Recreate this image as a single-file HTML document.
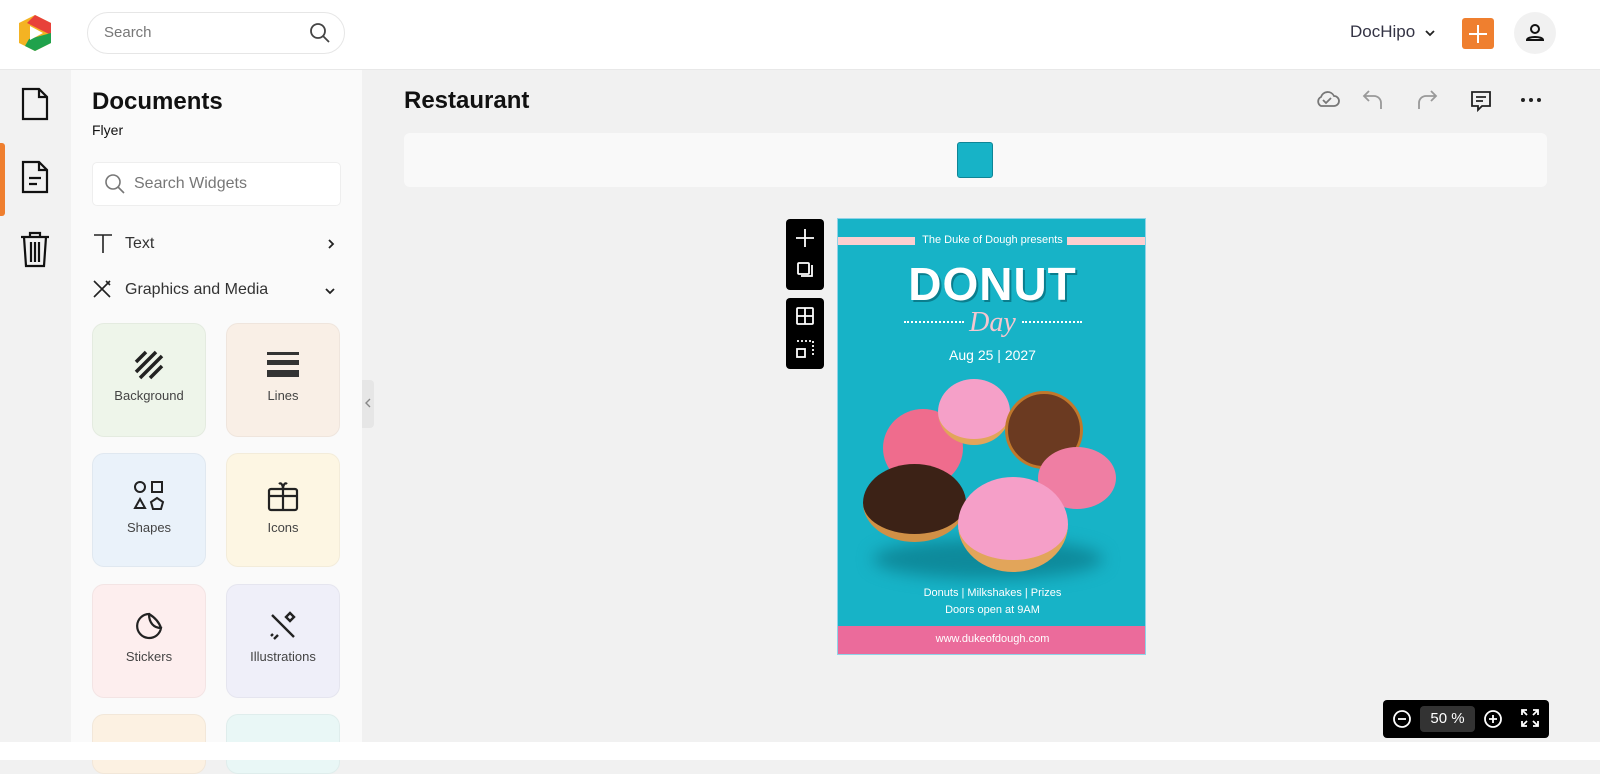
<!DOCTYPE html>
<html><head><meta charset="utf-8"><style>
*{box-sizing:border-box;margin:0;padding:0}
body{width:1600px;height:760px;overflow:hidden;font-family:"Liberation Sans",sans-serif;background:#f1f1f1;position:relative;color:#111}
.abs{position:absolute}
.hdr{left:0;top:0;width:1600px;height:70px;background:#fff;border-bottom:1px solid #e8e8e8}
.search{left:87px;top:12px;width:258px;height:42px;border:1px solid #e6e6e6;border-radius:21px;font-size:15px;color:#777;padding:11px 16px}
.rail{left:0;top:70px;width:71px;height:690px;background:#f2f2f2}
.panel{left:71px;top:70px;width:291px;height:690px;background:#fafafa}
.tile{width:114px;height:114px;border-radius:12px;border:1px solid rgba(0,0,0,.04);font-size:13px;color:#444;text-align:center}
.tile svg{display:block;margin:26px auto 8px}
</style></head><body>
<div class="abs hdr"></div>
<svg class="abs" style="left:15px;top:13px" width="40" height="40" viewBox="0 0 40 40"><path d="M20 2 L36 10 L36 30 L20 38 L4 30 L4 10Z" fill="#f4b323"/><path d="M20 2 L36 10 L36 22 L12 10Z" fill="#e8413a"/><path d="M36 20 L36 30 L20 38 L10 33 L14 26Z" fill="#20a24c"/><path d="M15 13 L28 20 L15 27Z" fill="#fff"/></svg>
<div class="abs search">Search</div>
<svg class="abs" style="left:309px;top:22px" width="22" height="22" viewBox="0 0 22 22" fill="none" stroke="#444" stroke-width="1.8"><circle cx="9" cy="9" r="7"/><path d="M14 14l6 6"/></svg>
<div class="abs" style="left:1350px;top:22px;font-size:17px;color:#334">DocHipo</div>
<svg class="abs" style="left:1424px;top:28px" width="12" height="10" viewBox="0 0 12 10" fill="none" stroke="#222" stroke-width="1.8"><path d="M2 3l4 4 4-4"/></svg>
<div class="abs" style="left:1462px;top:18px;width:32px;height:31px;background:#ef7f2f;border-radius:3px"></div>
<svg class="abs" style="left:1468px;top:24px" width="20" height="20" viewBox="0 0 20 20" stroke="#fff" stroke-width="2"><path d="M10 1v18M1 10h18"/></svg>
<div class="abs" style="left:1514px;top:12px;width:42px;height:42px;border-radius:50%;background:#f1f1f1"></div>
<svg class="abs" style="left:1524px;top:22px" width="22" height="22" viewBox="0 0 22 22" fill="none" stroke="#111" stroke-width="2"><circle cx="11" cy="7" r="4"/><path d="M3 18c0-4 16-4 16 0z"/></svg>

<div class="abs rail"></div>
<div class="abs" style="left:0;top:143px;width:5px;height:73px;background:#ef7f2f;border-radius:0 3px 3px 0"></div>
<svg class="abs" style="left:20px;top:87px" width="30" height="34" viewBox="0 0 30 34" fill="none" stroke="#111" stroke-width="2.2"><path d="M3 2h16l8 8v22H3z"/><path d="M19 2v8h8"/></svg>
<svg class="abs" style="left:20px;top:160px" width="30" height="34" viewBox="0 0 30 34" fill="none" stroke="#111" stroke-width="2.2"><path d="M3 2h16l8 8v22H3z"/><path d="M19 2v8h8M9 18h12M9 24h8"/></svg>
<svg class="abs" style="left:19px;top:230px" width="32" height="38" viewBox="0 0 32 38" fill="none" stroke="#111" stroke-width="2.2"><path d="M2 7h28M11 7V3h10v4M5 7l2 29h18l2-29M12 12v20M16 12v20M20 12v20"/></svg>

<div class="abs panel"></div>
<div class="abs" style="left:92px;top:88px;font-size:24px;font-weight:bold">Documents</div>
<div class="abs" style="left:92px;top:122px;font-size:14px">Flyer</div>
<div class="abs" style="left:92px;top:162px;width:249px;height:44px;background:#fff;border:1px solid #eee;border-radius:5px;font-size:16px;color:#777;padding:12px 0 0 41px">Search Widgets</div>
<svg class="abs" style="left:104px;top:173px" width="22" height="22" viewBox="0 0 22 22" fill="none" stroke="#777" stroke-width="1.6"><circle cx="9" cy="9" r="7"/><path d="M14 14l6 6"/></svg>
<svg class="abs" style="left:93px;top:233px" width="20" height="20" viewBox="0 0 20 20" stroke="#222" stroke-width="1.6"><path d="M1 2h18M10 2v18"/></svg>
<div class="abs" style="left:125px;top:235px;font-size:16px;color:#333">Text</div>
<svg class="abs" style="left:326px;top:238px" width="10" height="12" viewBox="0 0 10 12" fill="none" stroke="#222" stroke-width="1.8"><path d="M3 2l4 4-4 4"/></svg>
<svg class="abs" style="left:92px;top:279px" width="20" height="20" viewBox="0 0 20 20" fill="none" stroke="#222" stroke-width="1.6"><path d="M2 2l16 16M2 18L18 2M14 2l4 4"/></svg>
<div class="abs" style="left:125px;top:281px;font-size:16px;color:#333">Graphics and Media</div>
<svg class="abs" style="left:324px;top:286px" width="12" height="10" viewBox="0 0 12 10" fill="none" stroke="#222" stroke-width="1.8"><path d="M2 3l4 4 4-4"/></svg>

<div class="abs tile" style="left:92px;top:323px;background:#eef5ea"><svg width="30" height="30" viewBox="0 0 30 30" stroke="#222" stroke-width="3.5"><path d="M2 12L12 2M2 22L22 2M6 28L28 6M16 28L28 16"/></svg>Background</div>
<div class="abs tile" style="left:226px;top:323px;background:#f9efe6"><svg width="32" height="30" viewBox="0 0 32 30" fill="#333"><rect x="0" y="2" width="32" height="3"/><rect x="0" y="10" width="32" height="5"/><rect x="0" y="20" width="32" height="7"/></svg>Lines</div>
<div class="abs tile" style="left:92px;top:453px;background:#eaf2fa"><svg width="32" height="32" viewBox="0 0 32 32" fill="none" stroke="#222" stroke-width="2"><circle cx="7" cy="7" r="5"/><rect x="19" y="2" width="10" height="10"/><path d="M7 19l5 9H2z"/><path d="M24 18l6 4-2 7h-8l-2-7z"/></svg>Shapes</div>
<div class="abs tile" style="left:226px;top:453px;background:#fdf6e3"><svg width="32" height="32" viewBox="0 0 32 32" fill="none" stroke="#222" stroke-width="2.2"><rect x="2" y="9" width="28" height="21" rx="2"/><path d="M2 16h28M16 9v21M12 4c2-2 4 1 4 5 0-4 2-7 4-5"/></svg>Icons</div>
<div class="abs tile" style="left:92px;top:584px;background:#fdeeee"><svg width="30" height="30" viewBox="0 0 30 30" fill="none" stroke="#222" stroke-width="2.2"><path d="M15 3a12 12 0 1 0 12 14c-7 0-12-5-12-14zM15 3c5 3 10 8 12 14"/></svg>Stickers</div>
<div class="abs tile" style="left:226px;top:584px;background:#efeff9"><svg width="30" height="30" viewBox="0 0 30 30" fill="none" stroke="#222" stroke-width="2.4"><path d="M4 4l22 22M26 6l-4-4-4 4 4 4zM6 28l4-4M3 25l2-2"/></svg>Illustrations</div>
<div class="abs tile" style="left:92px;top:714px;background:#fcf1e2;height:60px"></div>
<div class="abs tile" style="left:226px;top:714px;background:#e9f7f6;height:60px"></div>
<div class="abs" style="left:362px;top:380px;width:12px;height:48px;background:#e6e6e6;border-radius:0 4px 4px 0"></div>
<svg class="abs" style="left:364px;top:397px" width="8" height="12" viewBox="0 0 8 12" fill="none" stroke="#888" stroke-width="1.4"><path d="M6 2L2 6l4 4"/></svg>

<div class="abs" style="left:404px;top:87px;font-size:24px;font-weight:bold">Restaurant</div>
<svg class="abs" style="left:1314px;top:88px" width="26" height="22" viewBox="0 0 26 22" fill="none" stroke="#777" stroke-width="1.8"><path d="M7 18h13a5 5 0 0 0 0-10 7 7 0 0 0-13 1 5 5 0 0 0 0 9z"/><path d="M9 12l3 3 5-5"/></svg>
<svg class="abs" style="left:1362px;top:88px" width="24" height="24" viewBox="0 0 24 24" fill="none" stroke="#999" stroke-width="1.8"><path d="M7 3L2 8l5 5M2 8h10a7 7 0 0 1 7 7v6"/></svg>
<svg class="abs" style="left:1414px;top:88px" width="24" height="24" viewBox="0 0 24 24" fill="none" stroke="#999" stroke-width="1.8"><path d="M17 3l5 5-5 5M22 8H12a7 7 0 0 0-7 7v6"/></svg>
<svg class="abs" style="left:1469px;top:89px" width="24" height="24" viewBox="0 0 24 24" fill="none" stroke="#222" stroke-width="1.8"><path d="M3 3h18v14h-8l-4 4v-4H3z"/><path d="M7 8h10M7 12h7"/></svg>
<svg class="abs" style="left:1520px;top:96px" width="22" height="8" viewBox="0 0 22 8" fill="#222"><circle cx="3" cy="4" r="2"/><circle cx="11" cy="4" r="2"/><circle cx="19" cy="4" r="2"/></svg>
<div class="abs" style="left:404px;top:133px;width:1143px;height:54px;background:#f9f9f9;border-radius:6px"></div>
<div class="abs" style="left:957px;top:142px;width:36px;height:36px;background:#17b3c7;border:1px solid #0e8596;border-radius:3px"></div>

<div class="abs" style="left:786px;top:219px;width:38px;height:71px;background:#000;border-radius:4px"></div>
<svg class="abs" style="left:794px;top:227px" width="22" height="56" viewBox="0 0 22 56" fill="none" stroke="#fff" stroke-width="1.8"><path d="M11 2v18M2 11h18"/><rect x="4" y="36" width="11" height="11" rx="1"/><path d="M7 49h11V38"/></svg>
<div class="abs" style="left:786px;top:298px;width:38px;height:71px;background:#000;border-radius:4px"></div>
<svg class="abs" style="left:794px;top:305px" width="22" height="56" viewBox="0 0 22 56" fill="none" stroke="#fff" stroke-width="1.8"><rect x="3" y="3" width="16" height="16" rx="1"/><path d="M11 3v16M3 11h16"/><path d="M3 36h16v16" stroke-dasharray="2 2"/><rect x="3" y="44" width="8" height="8"/></svg>

<div class="abs" style="left:837px;top:218px;width:309px;height:437px;background:#17b3c7;border:1px solid #8fd3e8;overflow:hidden">
 <div class="abs" style="left:0;top:18px;width:77px;height:8px;background:#fccfd0"></div>
 <div class="abs" style="left:229px;top:18px;width:80px;height:8px;background:#fccfd0"></div>
 <div class="abs" style="left:0;top:15px;width:309px;text-align:center;font-size:11px;color:#fff">The Duke of Dough presents</div>
 <div class="abs" style="left:0;top:38px;width:309px;text-align:center;font-size:46px;font-weight:bold;color:#fff;letter-spacing:1px;text-shadow:2px 2px 0 #0a7e8e">DONUT</div>
 <div class="abs" style="left:66px;top:102px;width:60px;border-top:2px dotted #fff"></div>
 <div class="abs" style="left:184px;top:102px;width:60px;border-top:2px dotted #fff"></div>
 <div class="abs" style="left:0;top:88px;width:309px;text-align:center;font-size:28px;font-style:italic;color:#f5c6cf;font-family:'Liberation Serif',serif">Day</div>
 <div class="abs" style="left:0;top:128px;width:309px;text-align:center;font-size:14px;color:#fff">Aug 25 | 2027</div>
 <div class="abs" style="left:35px;top:320px;width:230px;height:40px;border-radius:50%;background:#0e8a9b;filter:blur(8px)"></div>
 <div class="abs" style="left:45px;top:190px;width:80px;height:78px;border-radius:50%;background:#ef6c8d"></div>
 <div class="abs" style="left:100px;top:160px;width:72px;height:66px;border-radius:50%;background:#f5a0c8;border-bottom:6px solid #e2a55a"></div>
 <div class="abs" style="left:167px;top:172px;width:78px;height:78px;border-radius:50%;background:#6b3a21;border:3px solid #c0782c"></div>
 <div class="abs" style="left:200px;top:228px;width:78px;height:62px;border-radius:50%;background:#ef7ea3"></div>
 <div class="abs" style="left:25px;top:245px;width:103px;height:78px;border-radius:50%;background:#3c2216;border-bottom:8px solid #d09046"></div>
 <div class="abs" style="left:120px;top:258px;width:110px;height:95px;border-radius:50%;background:#f59fc8;border-bottom:12px solid #e2a55a"></div>
 <div class="abs" style="left:0;top:366px;width:309px;text-align:center;font-size:11px;color:#fff;line-height:17px">Donuts | Milkshakes | Prizes<br>Doors open at 9AM</div>
 <div class="abs" style="left:0;top:407px;width:309px;height:30px;background:#eb6b9b;text-align:center;font-size:11px;color:#fff;padding-top:7px">www.dukeofdough.com</div>
</div>

<div class="abs" style="left:1383px;top:700px;width:166px;height:38px;background:#000;border-radius:4px"></div>
<svg class="abs" style="left:1392px;top:709px" width="20" height="20" viewBox="0 0 20 20" fill="none" stroke="#fff" stroke-width="1.8"><circle cx="10" cy="10" r="8"/><path d="M6 10h8"/></svg>
<div class="abs" style="left:1420px;top:706px;width:55px;height:26px;background:#333;border-radius:4px;color:#fff;font-size:15px;text-align:center;padding-top:4px">50 %</div>
<svg class="abs" style="left:1483px;top:709px" width="20" height="20" viewBox="0 0 20 20" fill="none" stroke="#fff" stroke-width="1.8"><circle cx="10" cy="10" r="8"/><path d="M6 10h8M10 6v8"/></svg>
<svg class="abs" style="left:1520px;top:708px" width="20" height="20" viewBox="0 0 20 20" fill="none" stroke="#fff" stroke-width="1.8"><path d="M2 7V2h5M13 2h5v5M18 13v5h-5M7 18H2v-5M2 2l5 5M18 2l-5 5M18 18l-5-5M2 18l5-5"/></svg>
<div class="abs" style="left:0;top:742px;width:1600px;height:18px;background:#fff"></div>
</body></html>
